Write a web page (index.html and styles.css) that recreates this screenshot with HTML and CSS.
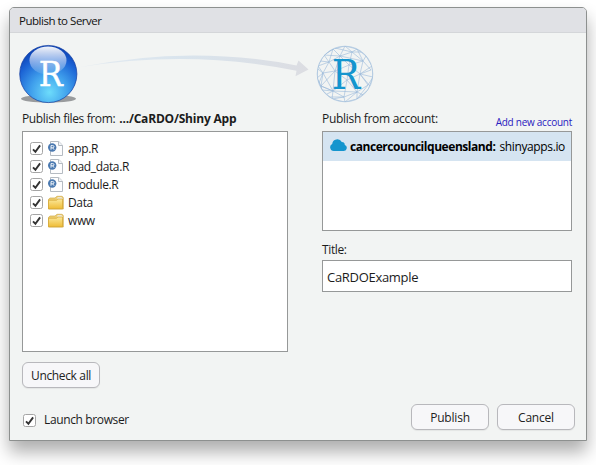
FILE: index.html
```html
<!DOCTYPE html>
<html lang="en">
<head>
<meta charset="utf-8">
<title>Publish to Server</title>
<link rel="stylesheet" href="styles.css">
</head>
<body>
<svg class="defs" width="0" height="0" aria-hidden="true">
  <defs>
    <linearGradient id="folderFill" x2="0" y2="1"><stop stop-color="#fbe99c"/><stop offset="1" stop-color="#efbc36"/></linearGradient>
    <symbol id="check" viewBox="1 1 11 11"><path d="M3 7.4 5.4 9.7 10.1 3.4" fill="none" stroke="#333" stroke-width="1.9"/></symbol>
    <symbol id="rfile" viewBox="0 0 16 16">
      <path d="M2.5.5h8.3l3.7 3.7v10.3h-12z" fill="#fdfdfe" stroke="#b5bbc2"/>
      <path d="M10.5.5v4h4" fill="#f3f5f8" stroke="#b5bbc2"/>
      <circle cx="4.2" cy="6.5" r="4.2" fill="#4b79b0"/>
      <path d="M3 8.7V4.6h1.7q1.3 0 1.3 1.1T4.7 6.8H3M4.6 6.8 6.1 8.7" fill="none" stroke="#fff" stroke-width=".9"/>
    </symbol>
    <symbol id="folder" viewBox="0 0 16 16">
      <path d="M.6 14V4.2L2 3h5l2-1.7h5l1.3 1.2V14z" fill="#efcf72" stroke="#cfa94a" stroke-width=".7"/>
      <path d="M9.5 2.2h4l1 1.2V6h-5z" fill="#eef0f0"/>
      <path d="M.5 5.2h8L10 4h4.5v9.8H.5z" fill="url(#folderFill)" stroke="#d3a42f" stroke-width=".7"/>
    </symbol>
  </defs>
</svg>
<main class="dialog">
  <header class="titlebar"><span class="t-head">Publish to Server</span></header>
  <div class="content">
    <svg class="banner" width="370" height="64" viewBox="17 42 370 64">
      <defs>
        <radialGradient id="ball" cx=".52" cy=".82" r=".78"><stop stop-color="#6ddcfb"/><stop offset=".42" stop-color="#3f9fec"/><stop offset=".78" stop-color="#1b62d4"/><stop offset="1" stop-color="#0d43b6"/></radialGradient>
        <linearGradient id="gloss" x2="0" y2="1"><stop stop-color="#fff" stop-opacity=".95"/><stop offset="1" stop-color="#fff" stop-opacity=".08"/></linearGradient>
        <linearGradient id="arrow"><stop stop-color="#e4ebf1"/><stop offset=".45" stop-color="#d9e4ed"/><stop offset="1" stop-color="#dcdde2"/></linearGradient>
        <clipPath id="globeClip"><circle cx="345" cy="74" r="27.8"/></clipPath>
      </defs>
      <ellipse cx="48.5" cy="98.7" rx="27.5" ry="3.8" fill="#999b9d"/>
      <circle cx="48.3" cy="74" r="28.6" fill="url(#ball)" stroke="#123da0" stroke-width=".7"/>
      <ellipse cx="48" cy="60.5" rx="18.5" ry="14" fill="url(#gloss)"/>
      <text class="ball-letter" x="38.8" y="86" textLength="24" lengthAdjust="spacingAndGlyphs">R</text>
      <path d="M79 67.3Q190 44.5 296.5 65.4L298.5 60.5 308.5 69.6 295.5 76.3 296.5 70.8Q190 49 79 67.3Z" fill="url(#arrow)"/>
      <g fill="none" stroke="#98b9da" stroke-width=".6">
        <circle cx="345" cy="74" r="27.8"/>
        <g clip-path="url(#globeClip)">
          <path d="M333 49 345 46 357 49 366 56 372 66 373 77 368 90 357 99 345 102 332 99 322 90 317 78 318 66 324 55Z"/>
          <path d="M333 49 340 56 352 52 363 61 360 74 368 85 357 92 344 97 333 91 321 86 323 73 329 62 340 56 349 65 363 61 371 70 360 74 357 92M340 56 335 71 349 65 347 80 360 74M329 62 335 71 347 80 333 91M323 73 335 71 333 91M347 80 357 92M347 80 344 97"/>
          <path d="M317 78 323 73 318 66 329 62 324 55 340 56 345 46 352 52 357 49 363 61 366 56M372 66 360 74 373 77 368 85M324 55 333 49M317 78 321 86 333 91 332 99 344 97 345 102 357 92 357 99 368 85M322 90 321 86M321 86 335 71M323 73 333 91M340 56 363 61M352 52 349 65M349 65 360 74M333 91 357 92M322 90 333 91"/>
          <path d="M320 61 329 62 333 49M318 69 323 73 319 83M327 94 333 91M363 95 357 92M370 86 360 74M361 52 352 52 335 48M326 97 344 97"/>
        </g>
      </g>
      <text class="globe-letter" x="331.8" y="89" textLength="28.5" lengthAdjust="spacingAndGlyphs">R</text>
    </svg>
    <div class="columns">
      <section class="left">
        <div class="caption"><span class="t-from">Publish files from:</span><b class="t-path">.../CaRDO/Shiny App</b></div>
        <ul class="files box">
          <li><svg class="check"><use href="#check"/></svg><svg class="icon"><use href="#rfile"/></svg><span>app.R</span></li>
          <li><svg class="check"><use href="#check"/></svg><svg class="icon"><use href="#rfile"/></svg><span>load_data.R</span></li>
          <li><svg class="check"><use href="#check"/></svg><svg class="icon"><use href="#rfile"/></svg><span>module.R</span></li>
          <li><svg class="check"><use href="#check"/></svg><svg class="icon"><use href="#folder"/></svg><span>Data</span></li>
          <li><svg class="check"><use href="#check"/></svg><svg class="icon"><use href="#folder"/></svg><span>www</span></li>
        </ul>
        <button class="btn uncheck">Uncheck all</button>
      </section>
      <section class="right">
        <div class="caption split"><span class="t-account">Publish from account:</span><a class="add">Add new account</a></div>
        <div class="accounts box">
          <div class="account">
            <svg class="cloud" width="17" height="12" viewBox="0 0 17 12"><path d="M3.7 12A3.7 3.7 0 0 1 2.2 5 5.1 5.1 0 0 1 11.8 3 3 3 0 0 1 14.8 6 3.1 3.1 0 0 1 13.9 12Z" fill="#1495ce"/></svg>
            <b class="t-name">cancercouncilqueensland:</b><span class="t-host">shinyapps.io</span>
          </div>
        </div>
        <div class="label">Title:</div>
        <div class="field box">CaRDOExample</div>
      </section>
    </div>
    <footer class="footer">
      <label class="launch"><svg class="check"><use href="#check"/></svg><span>Launch browser</span></label>
      <div class="actions"><button class="btn">Publish</button><button class="btn">Cancel</button></div>
    </footer>
  </div>
</main>
</body>
</html>
```
FILE: styles.css
```css
* { box-sizing: border-box; }
body { margin: 0; width: 596px; height: 465px; overflow: hidden; background: #fff; padding: 7px 9px; font: 12px/16px "Open Sans", "Noto Sans", sans-serif; color: #1c1c1c; letter-spacing: -.37px; }
.defs { display: block; }
.dialog { width: 578px; height: 434px; border: 1px solid #8d908f; border-radius: 5px 5px 0 0; background: #f2f4f3; overflow: hidden; box-shadow: 0 11px 17px rgba(0, 0, 0, .32); }
.titlebar { height: 25px; padding: 5px 9px; line-height: 16px; font-size: 11.5px; letter-spacing: -.48px; color: #111; background: #e0e1e5; border-bottom: 1px solid #d4d6d9; }
.content { padding: 9px 11px 0 12px; }
.banner { display: block; margin-left: -5px; }
.columns { display: flex; gap: 34px; margin-top: 5px; height: 291px; }
.left { width: 266px; }
.right { width: 250px; }
.caption { display: flex; height: 20px; gap: 4px; white-space: nowrap; }
.t-path { letter-spacing: -.2px; }
.t-account { letter-spacing: -.3px; }
.split { justify-content: space-between; }
.add { color: #2a20c0; font-size: 10px; line-height: 23px; letter-spacing: -.26px; }
.box { border: 1px solid #969898; background: #fff; }
.files { list-style: none; margin: 0; height: 221px; padding: 8px 7px; }
.files li { display: flex; align-items: center; height: 18px; }
.files .check { margin-bottom: 1px; }
.check { width: 13px; height: 13px; border: 1px solid #a5a5a5; border-radius: 2.5px; background: #fff; flex: none; }
.icon { width: 16px; height: 16px; margin: 0 4px 0 5px; }
.btn { width: 78px; height: 26px; padding: 1px 0 0; border: 1px solid #b8b8bc; border-radius: 6px; background: #f7f7f9; color: #222; font: inherit; letter-spacing: -.2px; box-shadow: 0 1px 1px rgba(0, 0, 0, .06); }
.uncheck { display: block; margin-top: 10px; letter-spacing: -.35px; }
.accounts { height: 100px; }
.account { display: flex; align-items: center; height: 29px; padding-left: 7px; background: #d5e4f1; color: #000; white-space: nowrap; }
.cloud { margin-bottom: 3px; }
.t-name { margin: 0 4px 0 3px; letter-spacing: -.45px; }
.label { margin-top: 11px; height: 18px; }
.field { height: 32px; padding: 8px 4px 0; font-size: 13px; line-height: 16px; letter-spacing: -.3px; }
.footer { display: flex; justify-content: space-between; }
.launch { display: flex; align-items: center; gap: 8px; height: 14px; margin: 11px 0 0 1px; }
.actions { display: flex; gap: 8px; margin-top: 2px; }
.ball-letter, .globe-letter { font-family: "DejaVu Serif", serif; letter-spacing: 0; }
.ball-letter { font-size: 33px; fill: #fff; stroke: #fff; stroke-width: .4px; }
.globe-letter { font-size: 41px; fill: #1495ce; }
```
